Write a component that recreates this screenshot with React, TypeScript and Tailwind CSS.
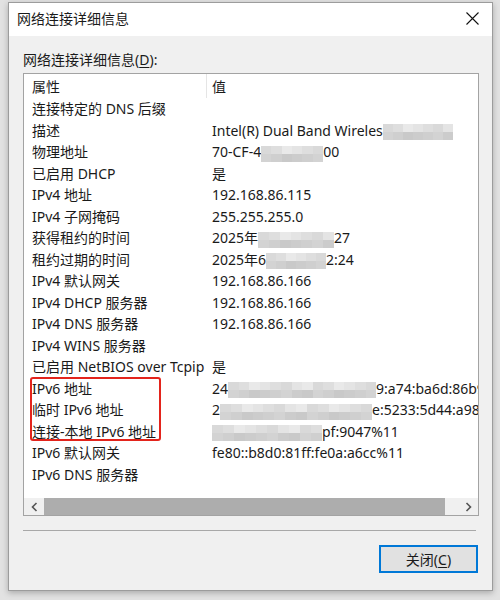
import type { ReactNode } from 'react';

const font = { fontFamily: '"Noto Sans", "Noto Sans CJK SC", sans-serif' };

const shades = ['#d9d9d9', '#cfcfcf', '#e4e4e4', '#c9c9c9', '#dedede', '#d3d3d3', '#e9e9e9', '#cccccc'];

function Mosaic({ w }: { w: number }) {
  const cols = Math.ceil(w / 11);
  return (
    <span className="inline-flex flex-col align-middle blur-[0.6px]" style={{ width: w }}>
      {[0, 1].map((r) => (
        <span key={r} className="flex h-[8px]">
          {Array.from({ length: cols }).map((_, c) => (
            <span
              key={c}
              className="h-full flex-1"
              style={{ background: shades[(c * 3 + r * 5 + (c % 2)) % shades.length] }}
            />
          ))}
        </span>
      ))}
    </span>
  );
}

type Row = { k: string; v?: ReactNode };

const rows: Row[] = [
  { k: '连接特定的 DNS 后缀' },
  { k: '描述', v: <>Intel(R) Dual Band Wireles<Mosaic w={70} /></> },
  { k: '物理地址', v: <>70-CF-4<Mosaic w={62} />00</> },
  { k: '已启用 DHCP', v: '是' },
  { k: 'IPv4 地址', v: '192.168.86.115' },
  { k: 'IPv4 子网掩码', v: '255.255.255.0' },
  { k: '获得租约的时间', v: <>2025年<Mosaic w={76} />27</> },
  { k: '租约过期的时间', v: <>2025年6<Mosaic w={60} />2:24</> },
  { k: 'IPv4 默认网关', v: '192.168.86.166' },
  { k: 'IPv4 DHCP 服务器', v: '192.168.86.166' },
  { k: 'IPv4 DNS 服务器', v: '192.168.86.166' },
  { k: 'IPv4 WINS 服务器' },
  { k: '已启用 NetBIOS over Tcpip', v: '是' },
  { k: 'IPv6 地址', v: <>24<Mosaic w={148} />9:a74:ba6d:86b9</> },
  { k: '临时 IPv6 地址', v: <>2<Mosaic w={152} />e:5233:5d44:a98</> },
  { k: '连接-本地 IPv6 地址', v: <><Mosaic w={110} />pf:9047%11</> },
  { k: 'IPv6 默认网关', v: 'fe80::b8d0:81ff:fe0a:a6cc%11' },
  { k: 'IPv6 DNS 服务器' },
];

export default function App() {
  return (
    <div className="h-[600px] w-[500px] overflow-hidden bg-[#e2e2e2] pl-[8px] pt-[2px] text-[14px] text-[#1a1a1a]" style={font}>
      <div className="flex h-[589px] w-[485px] flex-col border border-[#9c9c9c] bg-[#f0f0f0] shadow-[0_2px_6px_rgba(0,0,0,0.25)]">
        <div className="flex h-[33px] items-center justify-between bg-white pb-[3px] pl-[8px] pr-[13px]">
          <span>网络连接详细信息</span>
          <svg width="13" height="13" viewBox="0 0 13 13" className="mt-[1px]">
            <path d="M0.5 0.5 L12.5 12.5 M12.5 0.5 L0.5 12.5" stroke="#111" strokeWidth="1.1" fill="none" />
          </svg>
        </div>

        <div className="flex flex-col px-[14px]">
          <div className="mb-[3px] mt-[14px] h-[20px] leading-[20px]">
            网络连接详细信息(<span className="underline underline-offset-2">D</span>):
          </div>

          <div className="flex h-[443px] w-[456px] flex-col border border-[#a3a3a3] bg-white">
            <div className="flex h-[24px] shrink-0 items-center">
              <div className="flex h-full w-[183px] items-center border-r border-[#e5e5e5] pl-[8px]">属性</div>
              <div className="pl-[5px]">值</div>
            </div>

            <div className="relative flex-1 overflow-hidden">
              {rows.map((r) => (
                <div key={r.k} className="flex h-[21.5px] items-center whitespace-nowrap">
                  <div className="w-[183px] shrink-0 pl-[8px]">{r.k}</div>
                  <div className="pl-[5px]">{r.v}</div>
                </div>
              ))}
              <div className="absolute left-[6px] top-[279px] h-[64px] w-[131px] rounded-[3px] border-2 border-[#e3241c]" />
            </div>

            <div className="flex h-[17px] shrink-0 items-center bg-[#f0f0f0]">
              <div className="flex h-full w-[20px] items-center justify-center">
                <svg width="7" height="10" viewBox="0 0 7 10">
                  <path d="M5.5 1 L1.5 5 L5.5 9" stroke="#555" strokeWidth="1.6" fill="none" />
                </svg>
              </div>
              <div className="h-full w-[401px] bg-[#adadad]" />
              <div className="flex-1" />
              <div className="flex h-full w-[20px] items-center justify-center">
                <svg width="7" height="10" viewBox="0 0 7 10">
                  <path d="M1.5 1 L5.5 5 L1.5 9" stroke="#555" strokeWidth="1.6" fill="none" />
                </svg>
              </div>
            </div>
          </div>

          <div className="mt-[14px] h-px w-[453px] bg-[#a8a8a8]" />

          <button
            type="button"
            className="mt-[14px] flex h-[28px] w-[99px] items-center justify-center self-end border-2 border-[#0078d7] bg-[#e1e1e1]"
          >
            关闭(<span className="underline underline-offset-2">C</span>)
          </button>
        </div>
      </div>
    </div>
  );
}
